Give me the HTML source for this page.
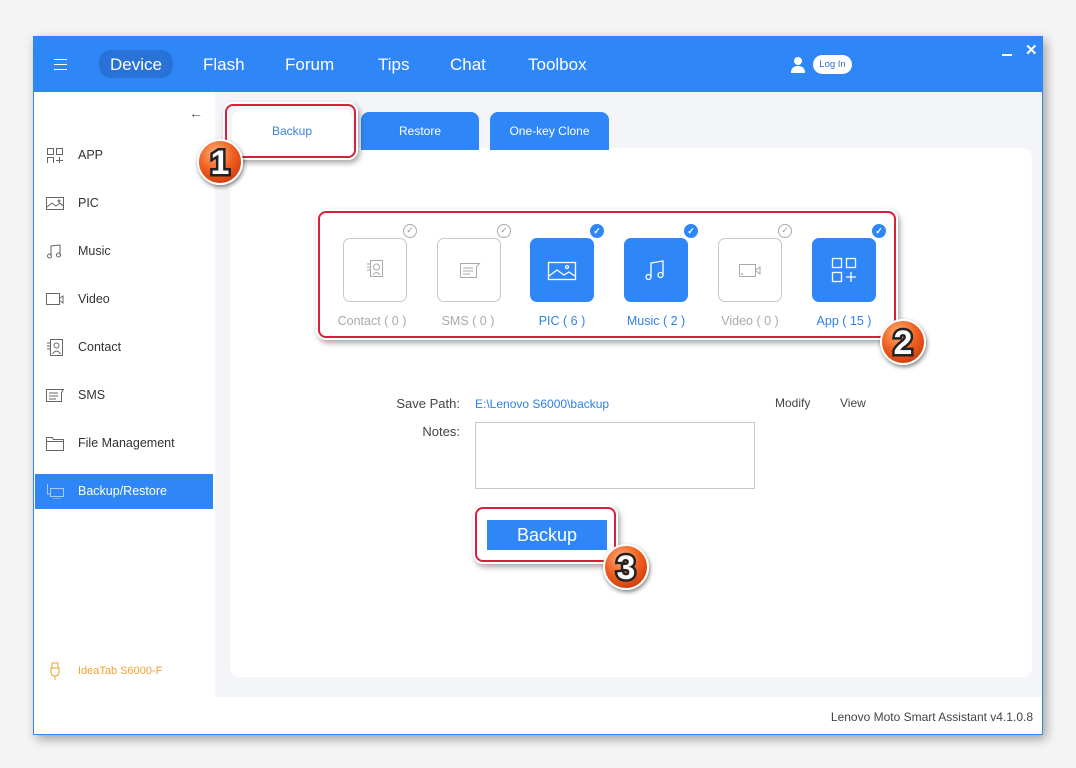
<!DOCTYPE html>
<html><head><meta charset="utf-8"><style>
*{margin:0;padding:0;box-sizing:border-box}
body{width:1076px;height:768px;background:#f4f4f4;font-family:"Liberation Sans",sans-serif;position:relative;overflow:hidden}
.a{position:absolute}
.win{left:33px;top:36px;width:1010px;height:699px;background:#fff;border:1px solid #3a86e8;box-shadow:3px 4px 10px rgba(0,0,0,.35)}
.hdr{left:33px;top:36px;width:1010px;height:56px;background:#2f87f7}
.nav{color:#fff;font-size:17px;top:55px}
.side{left:34px;top:92px;width:181px;height:605px;background:#fff}
.si{left:78px;font-size:12.5px;color:#333}
.ic{left:46px;width:18px;height:16px}
.content{left:215px;top:92px;width:827px;height:605px;background:#f3f5f8}
.card{left:230px;top:148px;width:802px;height:529px;background:#fff;border-radius:10px}
.tab{top:112px;height:38px;border-radius:8px 8px 0 0;background:#2f87f7;color:#fff;font-size:12px;text-align:center;line-height:38px}
.tile{top:238px;width:64px;height:64px;border-radius:7px}
.off{border:1px solid #c8c8c8;background:#fff}
.on{background:#2f87f7}
.lbl{top:314px;font-size:12.5px;width:94px;text-align:center}
.chk{top:224px;width:14px;height:14px;border-radius:50%}
.red{border:2px solid #d8203a;border-radius:8px;box-shadow:0 0 0 2px #fff,2px 3px 6px 2px rgba(0,0,0,.35)}
.badge{border-radius:50%;background:radial-gradient(circle at 40% 30%,#ffb27a 0%,#f06020 45%,#c02a08 100%);border:2px solid #fff;box-shadow:1px 2px 4px rgba(0,0,0,.5);color:#fff;font-weight:bold;font-family:"Liberation Sans",sans-serif;text-align:center;-webkit-text-stroke:5px #222;paint-order:stroke fill}
</style></head><body>
<div class="a win"></div>
<div class="a hdr"></div>
<div class="a" style="left:54px;top:59px;width:13px;height:11px;border-top:1.5px solid #fff;border-bottom:1.5px solid #fff"><div style="margin-top:3.5px;height:1.5px;background:#fff"></div></div>
<div class="a" style="left:99px;top:50px;width:74px;height:28px;border-radius:12px;background:#2872d8"></div>
<div class="a nav" style="left:110px">Device</div>
<div class="a nav" style="left:203px">Flash</div>
<div class="a nav" style="left:285px">Forum</div>
<div class="a nav" style="left:378px">Tips</div>
<div class="a nav" style="left:450px">Chat</div>
<div class="a nav" style="left:528px">Toolbox</div>
<svg class="a" style="left:790px;top:56px" width="16" height="18"><circle cx="8" cy="5" r="4" fill="#fff"/><path d="M1 17 Q1 10 8 10 Q15 10 15 17Z" fill="#fff"/></svg>
<div class="a" style="left:813px;top:55px;width:39px;height:19px;border-radius:10px;background:#fff;color:#2f6ad0;font-size:9.5px;text-align:center;line-height:19px">Log In</div>
<div class="a" style="left:1002px;top:54px;width:10px;height:2px;background:#fff"></div>
<div class="a" style="left:1025px;top:41px;color:#fff;font-size:15px;font-weight:bold">✕</div>

<div class="a side"></div>
<div class="a" style="left:189px;top:105px;color:#555;font-size:14px">←</div>
<svg class="a ic" style="top:147px" fill="none" stroke="#666"><rect x="1.5" y="1.5" width="6" height="6"/><rect x="10.5" y="1.5" width="6" height="6"/><rect x="1.5" y="10.5" width="6" height="6"/><path d="M13.5 10v7M10 13.5h7"/></svg>
<div class="a si" style="top:148px">APP</div>
<svg class="a ic" style="top:196px" fill="none" stroke="#666"><rect x="0.5" y="1.5" width="17" height="12"/><path d="M1 11l5-4 4 3 4-3 3 3"/><circle cx="13" cy="5" r="1"/></svg>
<div class="a si" style="top:196px">PIC</div>
<svg class="a ic" style="top:243px" fill="none" stroke="#666"><path d="M5 13V3l9-1v10"/><circle cx="3.5" cy="13" r="2"/><circle cx="12.5" cy="12" r="2"/></svg>
<div class="a si" style="top:244px">Music</div>
<svg class="a ic" style="top:292px" fill="none" stroke="#666"><rect x="0.5" y="1.5" width="13" height="11"/><path d="M14 6l3-2v7l-3-2"/></svg>
<div class="a si" style="top:292px">Video</div>
<svg class="a ic" style="top:339px;height:18px" fill="none" stroke="#666"><rect x="4.5" y="0.5" width="12" height="16"/><circle cx="10.5" cy="6.5" r="2.5"/><path d="M6.5 15q4-6 8 0M1 4h3M1 7h3M1 10h3"/></svg>
<div class="a si" style="top:340px">Contact</div>
<svg class="a ic" style="top:388px" fill="none" stroke="#666"><path d="M0.5 1.5h17l-2 3v9H0.5z M3 5h9M3 8h9M3 11h7"/></svg>
<div class="a si" style="top:388px">SMS</div>
<svg class="a ic" style="top:436px" fill="none" stroke="#666"><path d="M0.5 1.5h6l1 2h10v11H0.5zM0.5 5.5h17"/></svg>
<div class="a si" style="top:436px">File Management</div>
<div class="a" style="left:35px;top:474px;width:178px;height:35px;background:#2f87f7"></div>
<svg class="a ic" style="top:483px" fill="none" stroke="#a8ccf8"><rect x="4.5" y="5.5" width="13" height="8"/><path d="M1.5 1v10h3M7 16h8"/></svg>
<div class="a si" style="top:484px;color:#fff">Backup/Restore</div>
<svg class="a" style="left:49px;top:662px" width="12" height="20" fill="none" stroke="#f0a030"><path d="M3 1h6v5H3zM2 6h8v4q0 4-4 4t-4-4zM6 14v4"/></svg>
<div class="a" style="left:78px;top:665px;font-size:11px;color:#f0a030">IdeaTab S6000-F</div>

<div class="a content"></div>
<div class="a card"></div>
<div class="a tab" style="left:232px;width:120px;background:#fff;color:#3a82d8;top:110px;line-height:42px">Backup</div>
<div class="a tab" style="left:361px;width:118px">Restore</div>
<div class="a tab" style="left:490px;width:119px">One-key Clone</div>

<div class="a tile off" style="left:343px"><svg width="62" height="62" fill="none" stroke="#aaa"><rect x="26.5" y="21.5" width="12" height="16"/><circle cx="32.5" cy="28" r="3"/><path d="M29 36q3.5-5 7 0M23 25h3M23 28h3M23 31h3"/></svg></div>
<div class="a tile off" style="left:437px"><svg width="62" height="62" fill="none" stroke="#aaa"><path d="M22.5 24.5h19l-3 3v11h-16z M25 29h10M25 32h10M25 35h7"/></svg></div>
<div class="a tile on" style="left:530px"><svg width="64" height="64" fill="none" stroke="#fff" stroke-width="1.3"><rect x="18.5" y="24.5" width="27" height="17"/><path d="M19 38l8-6 7 5 5-3 6 4"/><circle cx="37" cy="29" r="1.5"/></svg></div>
<div class="a tile on" style="left:624px"><svg width="64" height="64" fill="none" stroke="#fff" stroke-width="1.3"><path d="M27 39V25l12-2v14"/><circle cx="24.5" cy="39" r="2.5"/><circle cx="36.5" cy="37" r="2.5"/></svg></div>
<div class="a tile off" style="left:718px"><svg width="62" height="62" fill="none" stroke="#aaa"><rect x="20.5" y="25.5" width="16" height="12"/><path d="M37 31l4-3v7l-4-3"/><circle cx="23" cy="35" r=".5"/></svg></div>
<div class="a tile on" style="left:812px"><svg width="64" height="64" fill="none" stroke="#fff" stroke-width="1.3"><rect x="20.5" y="20.5" width="9" height="9"/><rect x="34.5" y="20.5" width="9" height="9"/><rect x="20.5" y="34.5" width="9" height="9"/><path d="M39 34v10M34 39h10"/></svg></div>
<div class="a chk" style="left:403px;border:1.5px solid #aaa;color:#999;font-size:9px;text-align:center;line-height:11px">✓</div>
<div class="a chk" style="left:497px;border:1.5px solid #aaa;color:#999;font-size:9px;text-align:center;line-height:11px">✓</div>
<div class="a chk" style="left:590px;background:#2f87f7;color:#fff;font-size:9px;text-align:center;line-height:14px;font-weight:bold">✓</div>
<div class="a chk" style="left:684px;background:#2f87f7;color:#fff;font-size:9px;text-align:center;line-height:14px;font-weight:bold">✓</div>
<div class="a chk" style="left:778px;border:1.5px solid #aaa;color:#999;font-size:9px;text-align:center;line-height:11px">✓</div>
<div class="a chk" style="left:872px;background:#2f87f7;color:#fff;font-size:9px;text-align:center;line-height:14px;font-weight:bold">✓</div>
<div class="a lbl" style="left:325px;color:#aaa">Contact ( 0 )</div>
<div class="a lbl" style="left:421px;color:#aaa">SMS ( 0 )</div>
<div class="a lbl" style="left:515px;color:#2f80e8">PIC ( 6 )</div>
<div class="a lbl" style="left:609px;color:#2f80e8">Music ( 2 )</div>
<div class="a lbl" style="left:703px;color:#aaa">Video ( 0 )</div>
<div class="a lbl" style="left:797px;color:#2f80e8">App ( 15 )</div>

<div class="a" style="left:340px;top:396px;width:120px;text-align:right;font-size:13px;color:#444">Save Path:</div>
<div class="a" style="left:475px;top:397px;font-size:12px;color:#2f80e8">E:\Lenovo S6000\backup</div>
<div class="a" style="left:775px;top:396px;font-size:12px;color:#444">Modify</div>
<div class="a" style="left:840px;top:396px;font-size:12px;color:#444">View</div>
<div class="a" style="left:340px;top:424px;width:120px;text-align:right;font-size:13px;color:#444">Notes:</div>
<div class="a" style="left:475px;top:422px;width:280px;height:67px;border:1px solid #c8c8c8"></div>
<div class="a" style="left:487px;top:520px;width:120px;height:30px;background:#2f87f7;color:#fff;font-size:18px;text-align:center;line-height:30px">Backup</div>

<div class="a red" style="left:225px;top:104px;width:131px;height:54px"></div>
<div class="a red" style="left:318px;top:211px;width:578px;height:127px"></div>
<div class="a red" style="left:475px;top:507px;width:141px;height:55px"></div>
<div class="a badge" style="left:197px;top:139px;width:46px;height:46px;font-size:34px;line-height:44px">1</div>
<div class="a badge" style="left:880px;top:319px;width:46px;height:46px;font-size:34px;line-height:44px">2</div>
<div class="a badge" style="left:603px;top:544px;width:46px;height:46px;font-size:34px;line-height:44px">3</div>

<div class="a" style="left:700px;top:710px;width:333px;text-align:right;font-size:12px;color:#444">Lenovo Moto Smart Assistant v4.1.0.8</div>
</body></html>
